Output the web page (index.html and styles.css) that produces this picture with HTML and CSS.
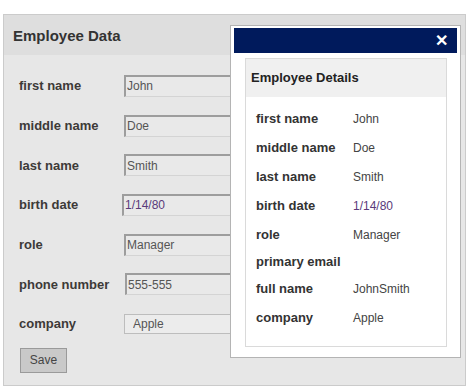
FILE: index.html
```html
<!DOCTYPE html>
<html lang="en">
<head>
    <meta charset="UTF-8">
    <title>Employee Data</title>
    <link rel="stylesheet" href="styles.css">
</head>
<body>
    <div class="panel">
        <h2 class="panelHead">Employee Data</h2>
        <form class="form">
            <div class="row">
                <label>first name</label>
                <input type="text" value="John">
            </div>
            <div class="row">
                <label>middle name</label>
                <input type="text" value="Doe">
            </div>
            <div class="row">
                <label>last name</label>
                <input type="text" value="Smith">
            </div>
            <div class="row">
                <label>birth date</label>
                <input type="text" class="date" value="1/14/80">
            </div>
            <div class="row">
                <label>role</label>
                <input type="text" value="Manager">
            </div>
            <div class="row">
                <label>phone number</label>
                <input type="text" class="phone" value="555-555">
            </div>
            <div class="row">
                <label>company</label>
                <input type="text" class="flat" value="Apple">
            </div>
            <button type="button" class="saveBtn">Save</button>
        </form>
    </div>

    <!-- 弹窗 -->
    <div class="modal">
        <div class="modalBar">
            <span class="close">&#x2715;</span>
        </div>
        <div class="card">
            <div class="cardHead">Employee Details</div>
            <div class="cardBody">
                <div class="drow"><span class="dlabel">first name</span><span>John</span></div>
                <div class="drow"><span class="dlabel">middle name</span><span>Doe</span></div>
                <div class="drow"><span class="dlabel">last name</span><span>Smith</span></div>
                <div class="drow"><span class="dlabel">birth date</span><span class="date">1/14/80</span></div>
                <div class="drow"><span class="dlabel">role</span><span>Manager</span></div>
                <div class="drow empty"><span class="dlabel">primary email</span><span></span></div>
                <div class="drow"><span class="dlabel">full name</span><span>JohnSmith</span></div>
                <div class="drow"><span class="dlabel">company</span><span>Apple</span></div>
            </div>
        </div>
    </div>
</body>
</html>
```

FILE: styles.css
```css
*{
    margin: 0;
    padding: 0;
    box-sizing: border-box;
}
body{
    background: #fff;
    font-family: "Liberation Sans", Arial, sans-serif;
    padding: 14px 0 0 3px;
    width: 470px;
    height: 391px;
    position: relative;
    overflow: hidden;
}
input,button{
    outline: none;
    font-family: "Liberation Sans", Arial, sans-serif;
}
/* 大框 */
.panel{
    width: 463px;
    height: 372px;
    background: #e7e7e7;
    border: 1px solid #cbcbcb;
}
.panelHead{
    height: 40px;
    line-height: 42px;
    background: #dedede;
    padding-left: 9px;
    font-size: 15px;
    color: #333;
}
.form{
    padding: 11px 0 0 15px;
}
.row{
    height: 39.7px;
    display: flex;
    align-items: center;
}
.row label{
    width: 105px;
    font-size: 13px;
    font-weight: bold;
    color: #3d3a38;
}
.row input{
    width: 220px;
    height: 22px;
    background: #e9e9e9;
    border-top: 2px solid #9d9d9d;
    border-left: 2px solid #9d9d9d;
    border-right: 1px solid #d4d4d4;
    border-bottom: 1px solid #d4d4d4;
    padding-left: 1px;
    font-size: 12px;
    color: #555;
}
.row input.date{
    margin-left: -2px;
    color: #5a3a7a;
}
.row input.phone{
    margin-left: 1px;
}
.row input.flat{
    height: 20px;
    border: 1px solid #bdbdbd;
    background: #ececec;
    padding-left: 8px;
}
.saveBtn{
    margin-top: 4px;
    margin-left: 1px;
    width: 47px;
    height: 25px;
    background: #c9c9c9;
    border: 1px solid #9a9a9a;
    font-size: 12px;
    color: #444;
}
/* 弹窗 */
.modal{
    position: absolute;
    left: 230px;
    top: 25px;
    width: 231px;
    height: 333px;
    background: #fff;
    border: 1px solid #b4b4b4;
    padding: 2px 3px;
}
.modalBar{
    height: 25px;
    background: #001a5c;
    display: flex;
    justify-content: flex-end;
    align-items: center;
    padding-right: 9px;
}
.close{
    color: #fff;
    font-size: 16px;
    font-weight: bold;
    line-height: 1;
}
.card{
    margin: 5px 10px 0 11px;
    height: 289px;
    border: 1px solid #dadada;
}
.cardHead{
    height: 38px;
    line-height: 38px;
    background: #f0f0f0;
    padding-left: 5px;
    font-size: 13px;
    font-weight: bold;
    color: #222;
}
.cardBody{
    padding: 7px 0 0 10px;
}
.drow{
    height: 29px;
    display: flex;
    align-items: center;
    font-size: 12px;
    color: #444;
}
.drow.empty{
    height: 25px;
}
.dlabel{
    width: 97px;
    font-size: 13px;
    font-weight: bold;
    color: #333;
}
.drow .date{
    color: #5a3a7a;
}
```
